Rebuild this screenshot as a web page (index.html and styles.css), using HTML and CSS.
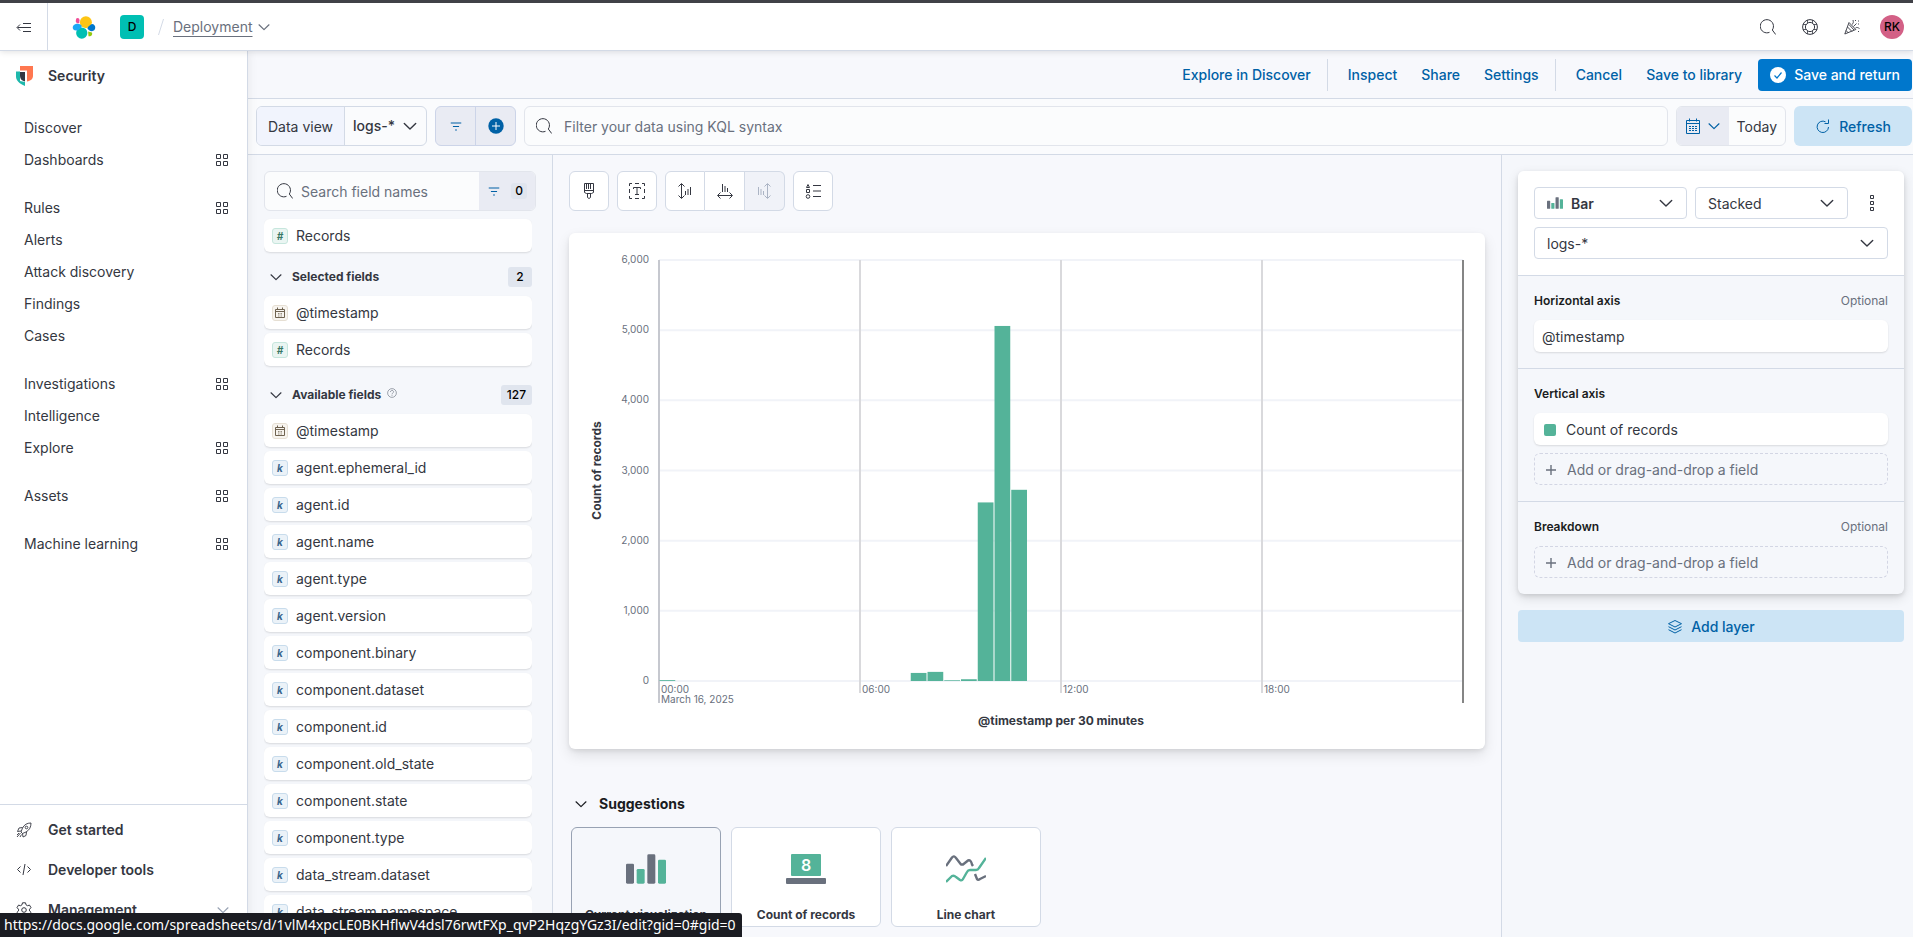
FILE: index.html
```html
<!DOCTYPE html>
<html lang="en">
<head>
  <meta charset="UTF-8">
  <title>Lens - Elastic</title>
  <meta name="viewport" content="width=device-width, initial-scale=1.0">
  <link rel="stylesheet" href="styles.css">
</head>
<body>

<!-- Shared icons -->
<svg class="sprite" aria-hidden="true">
  <symbol id="i-down" viewBox="0 0 16 16"><path d="M2.3 5.5 8 11l5.700-5.500" fill="none" stroke="currentColor" stroke-width="1.400" stroke-linecap="round" stroke-linejoin="round"/></symbol>
  <symbol id="i-search" viewBox="0 0 16 16"><path d="M9.500 13.300A6.600 6.600 0 1 1 12.300 11M12.300 11l3.400 4.500" fill="none" stroke="currentColor"/></symbol>
  <symbol id="i-filter" viewBox="0 0 16 16"><path d="M2 4.500h12M4.500 8.500h7M7 12.500h2" fill="none" stroke="currentColor" stroke-width="1.200"/></symbol>
  <symbol id="i-apps" viewBox="0 0 16 16"><path d="M2.500 2.500h4v4h-4zM9.500 2.500h4v4h-4zM2.500 9.500h4v4h-4zM9.500 9.500h4v4h-4z" fill="none" stroke="currentColor"/></symbol>
  <symbol id="i-plus" viewBox="0 0 16 16"><path d="M8 3v10M3 8h10" fill="none" stroke="currentColor" stroke-width="1.400"/></symbol>
  <symbol id="i-bars" viewBox="0 0 30 22">
    <rect x="0" y="7" width="6" height="15" rx="1" fill="#69707d"/>
    <rect x="8" y="11" width="6" height="11" rx="1" fill="#54b399"/>
    <rect x="16" y="0" width="6" height="22" rx="1" fill="#69707d"/>
    <rect x="24" y="4" width="6" height="18" rx="1" fill="#54b399"/>
  </symbol>
  <symbol id="i-date" viewBox="0 0 14 14"><path d="M2.500 3.500h9v8h-9zM2.500 5.500h9M4.500 1.500v2M9.500 1.500v2" fill="none" stroke="currentColor"/><path d="M5.500 7v3.500M7 7v3.500M8.500 7v3.500" fill="none" stroke="currentColor" stroke-width=".7" stroke-dasharray="1 .5"/></symbol>
</svg>

<div class="app">
  <header class="header">
    <button class="header-menu" aria-label="Collapse navigation">
      <svg width="16" height="16" viewBox="0 0 16 16" fill="none" stroke="currentColor"><path d="M7 3.500h8M1.500 7.500H15M7 11.500h8M4 4.500l-3 3 3 3"/></svg>
    </button>
    <a href="#" class="logo" aria-label="Elastic home">
      <svg width="24" height="24" viewBox="0 0 32 32">
        <circle cx="18.500" cy="9.500" r="8" fill="#fec514"/>
        <circle cx="13" cy="24" r="7.500" fill="#00bfb3"/>
        <path d="M5 12c3-1 7 .5 8 2.500.500 2.500-3 4.500-5.500 6C3 21.500.500 19 1 16c.500-2 2-3.500 4-4z" fill="#1ba9f5"/>
        <path d="M26.500 12c3 0 4.500 2.500 4.500 5s-2 4.500-4.500 4.500-5.500-2-6-4c1-2.500 4-4.500 6-5.500z" fill="#0077cc"/>
        <path d="M5.500 5C7 3 10 4 10 7l-.5 4C7 11.500 5 10 5 8z" fill="#f04e98"/>
        <path d="m21.500 22 5 1.200c1.500 3-1.500 6-4.500 5z" fill="#93c90e"/>
      </svg>
    </a>
    <button class="space" aria-label="Default space">D</button>
    <nav class="crumbs" aria-label="Breadcrumbs">
      <svg width="6" height="18" viewBox="0 0 6 18"><path d="M5.500 1 .5 17" stroke="#d3dae6"/></svg>
      <a href="#">Deployment</a>
      <svg class="icon-sm"><use href="#i-down"/></svg>
    </nav>
    <div class="header-right">
      <button aria-label="Search"><svg class="icon"><use href="#i-search"/></svg></button>
      <button aria-label="Help">
        <svg class="icon" viewBox="0 0 16 16" fill="none" stroke="currentColor"><circle cx="8" cy="8" r="7.400"/><circle cx="8" cy="8" r="4.600"/><path d="M5.500 1v3.500M10.500 1v3.500M5.500 11.500V15M10.500 11.500V15M1 5.500h3.500M11.500 5.500H15M1 10.500h3.500M11.500 10.500H15" stroke-width=".8"/></svg>
      </button>
      <button aria-label="What's new">
        <svg class="icon" viewBox="0 0 16 16" fill="none" stroke="currentColor" stroke-width=".9"><path d="M5 3.500.800 15l11-4.500zM3.500 8l4.500 4.500M2 11.500l2.500 2.500M5 5.500l5 5.500M8 5.500c1.500-1 1.500-2.500 1-4.500M9.500 7.500l3-3M11.500 9c1-1 2.500-.5 4 .5M11.500 1v1M14.500 1.500v1M14 5h1M14.500 12v1"/></svg>
      </button>
      <button class="user" aria-label="User menu">RK</button>
    </div>
  </header>

  <aside class="sidebar">
    <a href="#" class="solution">
      <svg width="17" height="20" viewBox="0 0 17 20">
        <path d="M4 0h13v10c0 3-2.500 5-6 5.500V4.500H4z" fill="#ff7750"/>
        <path d="M0 5.500h4V15l5 1v4C3 17.500 0 14.500 0 10.500z" fill="#1eb8ac"/>
        <path d="M4 6h5v9.500C6 15 4 13 4 10z" fill="#343741"/>
      </svg>
      <span>Security</span>
    </a>
    <nav class="side-nav" aria-label="Security">
      <ul>
        <li><a href="#">Discover</a></li>
        <li><a href="#">Dashboards</a><svg class="icon"><use href="#i-apps"/></svg></li>
      </ul>
      <ul>
        <li><a href="#">Rules</a><svg class="icon"><use href="#i-apps"/></svg></li>
        <li><a href="#">Alerts</a></li>
        <li><a href="#">Attack discovery</a></li>
        <li><a href="#">Findings</a></li>
        <li><a href="#">Cases</a></li>
      </ul>
      <ul>
        <li><a href="#">Investigations</a><svg class="icon"><use href="#i-apps"/></svg></li>
        <li><a href="#">Intelligence</a></li>
        <li><a href="#">Explore</a><svg class="icon"><use href="#i-apps"/></svg></li>
      </ul>
      <ul>
        <li><a href="#">Assets</a><svg class="icon"><use href="#i-apps"/></svg></li>
      </ul>
      <ul>
        <li><a href="#">Machine learning</a><svg class="icon"><use href="#i-apps"/></svg></li>
      </ul>
    </nav>
    <div class="side-footer">
      <a href="#">
        <svg class="icon" viewBox="0 0 16 16" fill="none" stroke="currentColor" stroke-width=".9"><path d="M15 1c-4 0-6.500 1.500-8.500 5L5 10l1.500 1.500L10 10c3.500-2 5-5 5-9zM6.500 5.500 3 6 1.500 9.500l3.500-.5M10.500 10 10 13.500 7 15l-.5-3.500M4.500 11l-3.500 4M3 11l-2 2M5.500 12.500 4 15"/><circle cx="10.500" cy="5.500" r="1.300"/></svg>
        <span>Get started</span>
      </a>
      <a href="#">
        <svg class="icon" viewBox="0 0 16 16" fill="none" stroke="currentColor"><path d="M4.500 4.500 1.500 7.500l3 3M11.500 4.500l3 3-3 3M9 2 7 13"/></svg>
        <span>Developer tools</span>
      </a>
      <a href="#">
        <svg class="icon" viewBox="0 0 16 16" fill="none" stroke="currentColor"><path d="M6.500.800h3l.5 2 1.500.900 2-.6 1.500 2.600-1.500 1.500v1.700l1.500 1.400-1.500 2.600-2-.5-1.500.8-.5 2h-3l-.5-2-1.500-.8-2 .5L1 10.300l1.500-1.400V7.200L1 5.700l1.500-2.600 2 .6L6 2.800z"/><circle cx="8" cy="8" r="2.300"/></svg>
        <span>Management</span>
        <svg class="icon-sm muted"><use href="#i-down"/></svg>
      </a>
    </div>
  </aside>

  <main class="main">
    <div class="actions">
      <div class="action-group"><a href="#">Explore in Discover</a></div>
      <div class="action-group"><a href="#">Inspect</a><a href="#">Share</a><a href="#">Settings</a></div>
      <div class="action-group"><a href="#">Cancel</a><a href="#">Save to library</a></div>
      <button class="save">
        <svg class="icon" viewBox="0 0 16 16"><circle cx="8" cy="8" r="8" fill="#fff"/><path d="m4.500 8.500 2.500 2.500 4.500-5.500" fill="none" stroke="#07c" stroke-width="1.200"/></svg>
        Save and return
      </button>
    </div>

    <div class="query">
      <div class="data-view">
        <label for="dataView">Data view</label>
        <div class="select">
          <select id="dataView"><option>logs-*</option></select>
          <svg class="icon"><use href="#i-down"/></svg>
        </div>
      </div>
      <div class="filter-group">
        <button aria-label="Saved query menu"><svg class="icon-sm"><use href="#i-filter"/></svg></button>
        <button aria-label="Add filter"><svg class="icon" viewBox="0 0 16 16"><circle cx="8" cy="8" r="7.700" fill="#0061a6"/><path d="M8 4v8M4 8h8" stroke="#fff"/></svg></button>
      </div>
      <div class="kql">
        <svg class="icon"><use href="#i-search"/></svg>
        <input type="text" aria-label="Query" placeholder="Filter your data using KQL syntax">
      </div>
      <div class="date">
        <button class="date-quick" aria-label="Date quick select">
          <svg class="icon" viewBox="0 0 16 16" fill="none" stroke="currentColor"><path d="M1.500 2.500h13v13h-13zM1.500 5.500h13M4.500.5v3M11.500.5v3"/><path d="M4 8.500h8M4 10.500h8M4 12.500h8" stroke-dasharray="2 1"/></svg>
          <svg class="icon-sm"><use href="#i-down"/></svg>
        </button>
        <button class="date-value">Today</button>
      </div>
      <button class="refresh">
        <svg class="icon" viewBox="0 0 16 16" fill="none" stroke="currentColor"><path d="M10.500 2.800A5.700 5.700 0 1 0 13.500 8M9.500 4.500h4V.5"/></svg>
        Refresh
      </button>
    </div>

    <div class="workspace">
      <section class="fields" aria-label="Fields">
        <div class="field-search">
          <svg class="icon"><use href="#i-search"/></svg>
          <input type="text" aria-label="Search field names" placeholder="Search field names">
          <button aria-label="Filter by type"><svg class="icon-sm"><use href="#i-filter"/></svg><span>0</span></button>
        </div>
        <div class="field-scroll">
          <ul class="field-list">
            <li><i class="tok num">#</i>Records</li>
          </ul>
          <h2 class="field-head"><svg class="icon-sm"><use href="#i-down"/></svg>Selected fields<span>2</span></h2>
          <ul class="field-list">
            <li><i class="tok date-tok"><svg><use href="#i-date"/></svg></i>@timestamp</li>
            <li><i class="tok num">#</i>Records</li>
          </ul>
          <h2 class="field-head second"><svg class="icon-sm"><use href="#i-down"/></svg>Available fields
            <svg class="help" viewBox="0 0 16 16" fill="none" stroke="currentColor"><circle cx="8" cy="8" r="7"/><path d="M5.500 6.500C5.500 3 10.500 3 10.500 6.200 10.500 8 8 8 8 10M8 11v1.500"/></svg>
            <span>127</span></h2>
          <ul class="field-list">
            <li><i class="tok date-tok"><svg><use href="#i-date"/></svg></i>@timestamp</li>
            <li><i class="tok">k</i>agent.ephemeral_id</li>
            <li><i class="tok">k</i>agent.id</li>
            <li><i class="tok">k</i>agent.name</li>
            <li><i class="tok">k</i>agent.type</li>
            <li><i class="tok">k</i>agent.version</li>
            <li><i class="tok">k</i>component.binary</li>
            <li><i class="tok">k</i>component.dataset</li>
            <li><i class="tok">k</i>component.id</li>
            <li><i class="tok">k</i>component.old_state</li>
            <li><i class="tok">k</i>component.state</li>
            <li><i class="tok">k</i>component.type</li>
            <li><i class="tok">k</i>data_stream.dataset</li>
            <li><i class="tok">k</i>data_stream.namespace</li>
          </ul>
        </div>
      </section>

      <section class="canvas" aria-label="Visualization">
        <div class="toolbar">
          <button aria-label="Style"><svg class="icon" viewBox="0 0 16 16" fill="none" stroke="currentColor"><path d="M3.500.5h9v9l-2 1h-5l-2-1zM3.500 7.500h9M6.500 10.500v4l1.500 1 1.500-1v-4M5.500 1v5M7.500 1v5M9.500 1v5"/></svg></button>
          <button aria-label="Titles and text"><svg class="icon" viewBox="0 0 16 16" fill="none" stroke="currentColor"><path d="M.5 3V.5H3M13 .5h2.500V3M15.500 13v2.500H13M3 15.500H.5V13M6 .5h4M6 15.500h4M.5 6v4M15.500 6v4M4.500 6V4.500h7V6M8 4.500v7M6 11.500h4"/></svg></button>
          <div class="button-group">
            <button aria-label="Left axis"><svg class="icon" viewBox="0 0 16 16" fill="none" stroke="currentColor"><path d="M4.500 1v14M1.500 3.500l3-3 3 3M1.500 12.500l3 3 3-3M8.500 8v4M11 6v6M13.500 4v8"/></svg></button>
            <button aria-label="Bottom axis"><svg class="icon" viewBox="0 0 16 16" fill="none" stroke="currentColor"><path d="M1 12.500h14M3.500 9.500l-3 3 3 3M12.500 9.500l3 3-3 3M5.500 1v8M8 3v6M10.500 5v4"/></svg></button>
            <button aria-label="Right axis" disabled><svg class="icon" viewBox="0 0 16 16" fill="none" stroke="currentColor"><path d="M10.500 1v14M7.500 3.500l3-3 3 3M7.500 12.500l3 3 3-3M6.500 8v4M4 6v6M1.500 4v8"/></svg></button>
          </div>
          <button aria-label="Legend"><svg class="icon" viewBox="0 0 16 16" fill="none" stroke="currentColor"><path d="M1.500 4.500 3 1.500l1.500 3zM1.500 6.500h3v3h-3zM8 2.500h8M8 8h8M8 13.500h8"/><circle cx="3" cy="13.500" r="1.800"/></svg></button>
        </div>

        <div class="chart-panel">
          <svg class="chart" id="chart" viewBox="0 0 884 484" role="img" aria-label="Count of records by @timestamp per 30 minutes"></svg>
        </div>

        <h2 class="suggest-head"><svg class="icon-sm"><use href="#i-down"/></svg>Suggestions</h2>
        <div class="suggestions">
          <button class="suggestion current">
            <svg width="40" height="30"><use href="#i-bars"/></svg>
            <span>Current visualization</span>
          </button>
          <button class="suggestion">
            <svg width="40" height="30" viewBox="0 0 40 30"><rect x="5" width="30" height="22" rx="1" fill="#54b399"/><rect y="24" width="40" height="6" rx="1" fill="#69707d"/><text x="20" y="17" text-anchor="middle" fill="#fff" font-size="16" font-weight="600">8</text></svg>
            <span>Count of records</span>
          </button>
          <button class="suggestion">
            <svg width="40" height="30" viewBox="0 0 40 30" fill="none" stroke-width="2.400" stroke-linejoin="round"><path d="M0 12 6 3.500Q8 1 10 4l5 6.500h2l5-4q3-1 4 4l1 1.500M29 20l2 5q1 1.500 3 0l6-3" stroke="#69707d"/><path d="M0 28l6-6q2-1 4 1l4 3q2 1 3-1l4-7q1-2 3-2h6q2 0 3-2l7-10" stroke="#54b399"/></svg>
            <span>Line chart</span>
          </button>
        </div>
      </section>

      <section class="config" aria-label="Layer settings">
        <div class="layer">
          <div class="layer-head">
            <div class="layer-row">
              <div class="select boxed">
                <svg class="bars-icon"><use href="#i-bars"/></svg>
                <select class="strong" aria-label="Visualization type"><option>Bar</option></select>
                <svg class="icon"><use href="#i-down"/></svg>
              </div>
              <div class="select boxed">
                <select aria-label="Stacking"><option>Stacked</option></select>
                <svg class="icon"><use href="#i-down"/></svg>
              </div>
              <button class="more" aria-label="Layer actions"><svg class="icon" viewBox="0 0 16 16" fill="none" stroke="currentColor"><path d="M6.500.5h3v3h-3zM6.500 6.500h3v3h-3zM6.500 12.500h3v3h-3z"/></svg></button>
            </div>
            <div class="select boxed">
              <select aria-label="Layer data view"><option>logs-*</option></select>
              <svg class="icon"><use href="#i-down"/></svg>
            </div>
          </div>
          <div class="dimension">
            <h3>Horizontal axis <small>Optional</small></h3>
            <button class="field">@timestamp</button>
          </div>
          <div class="dimension">
            <h3>Vertical axis</h3>
            <button class="field"><span class="swatch"></span>Count of records</button>
            <button class="field empty"><svg class="icon"><use href="#i-plus"/></svg>Add or drag-and-drop a field</button>
          </div>
          <div class="dimension">
            <h3>Breakdown <small>Optional</small></h3>
            <button class="field empty"><svg class="icon"><use href="#i-plus"/></svg>Add or drag-and-drop a field</button>
          </div>
        </div>
        <button class="add-layer">
          <svg class="icon" viewBox="0 0 16 16" fill="none" stroke="currentColor" stroke-linejoin="round"><path d="M8 1.500 14.500 4.700 8 8 1.500 4.700zM1.500 7.700 8 11l6.500-3.300M1.500 10.700 8 14l6.500-3.300"/></svg>
          Add layer
        </button>
      </section>
    </div>
  </main>
</div>

<div class="link-status">https://docs.google.com/spreadsheets/d/1vlM4xpcLE0BKHflwV4dsl76rwtFXp_qvP2HqzgYGz3I/edit?gid=0#gid=0</div>

<script src="chart.js"></script>
</body>
</html>
```

FILE: styles.css
```css
* { box-sizing: border-box; margin: 0; padding: 0; }

body {
  font-family: Inter, "Liberation Sans", sans-serif;
  font-size: 14px;
  line-height: 20px;
  color: #343741;
  background: #f7f8fc;
}

a { color: inherit; text-decoration: none; }
ul { list-style: none; }

button, input, select {
  font: inherit;
  color: inherit;
  background: none;
  border: none;
  outline: none;
}

button { cursor: pointer; }
select { appearance: none; }
svg { flex: none; }

.sprite { position: absolute; width: 0; height: 0; }
.icon { width: 16px; height: 16px; }
.icon-sm { width: 14px; height: 14px; }
.muted { color: #98a2b3; }

.app {
  display: grid;
  grid-template: auto minmax(0, 1fr) / 248px minmax(0, 1fr);
  height: 100vh;
  border-top: 3px solid #404147;
  overflow: hidden;
}

/* Header */
.header {
  grid-column: 1 / -1;
  display: flex;
  align-items: center;
  height: 48px;
  background: #fff;
  border-bottom: 1px solid #d3dae6;
  box-shadow: 0 1px 6px rgba(0, 0, 0, .12);
  z-index: 2;
}

.header-menu {
  width: 48px;
  height: 47px;
  border-right: 1px solid #d3dae6;
}

.header-menu svg { vertical-align: middle; }
.logo { display: flex; margin-left: 24px; }

.space {
  width: 24px;
  height: 24px;
  margin-left: 24px;
  border-radius: 4px;
  background: #00bfb3;
  color: #000;
  font-size: 12px;
  font-weight: 500;
}

.crumbs {
  display: flex;
  align-items: center;
  gap: 8px;
  margin-left: 14px;
  color: #69707d;
}

.crumbs a {
  margin-left: 1px;
  text-decoration: underline;
  text-underline-offset: 4px;
}

.crumbs .icon-sm { margin-left: -4px; }

.header-right {
  display: flex;
  align-items: center;
  gap: 26px;
  margin-left: auto;
  padding-right: 9px;
}

.header-right button { display: flex; }

.header-right .user {
  width: 24px;
  height: 24px;
  margin-left: -6px;
  align-items: center;
  justify-content: center;
  border-radius: 50%;
  background: #d36086;
  color: #000;
  font-size: 12px;
  font-weight: 500;
}

/* Sidebar */
.sidebar {
  display: flex;
  flex-direction: column;
  min-height: 0;
  background: #fff;
  border-right: 1px solid #d3dae6;
  box-shadow: 0 0 10px rgba(0, 0, 0, .08);
  z-index: 1;
}

.solution {
  display: flex;
  align-items: center;
  gap: 15px;
  height: 49px;
  padding-left: 16px;
  font-weight: 600;
}

.side-nav {
  flex: 1;
  display: flex;
  flex-direction: column;
  gap: 16px;
  padding: 12px 17px 0 24px;
}

.side-nav li {
  display: flex;
  align-items: center;
  justify-content: space-between;
  height: 32px;
}

.side-footer {
  padding: 5px 0 7px;
  border-top: 1px solid #d3dae6;
}

.side-footer a {
  display: flex;
  align-items: center;
  gap: 16px;
  height: 40px;
  padding: 0 17px 0 16px;
  font-weight: 600;
}

.side-footer .muted { margin-left: auto; }

/* Top actions */
.main {
  display: flex;
  flex-direction: column;
  min-width: 0;
  min-height: 0;
}

.actions {
  display: flex;
  align-items: center;
  justify-content: flex-end;
  height: 48px;
  padding-right: 1px;
  border-bottom: 1px solid #d3dae6;
  color: #0061a6;
  font-weight: 500;
}

.action-group {
  display: flex;
  gap: 24px;
  padding: 6px 16px 6px 20px;
}

.action-group + .action-group { border-left: 1px solid #d3dae6; }

.save {
  display: flex;
  align-items: center;
  gap: 8px;
  height: 32px;
  padding: 0 12px;
  border-radius: 4px;
  background: #07c;
  color: #fff;
}

/* Query bar */
.query {
  display: flex;
  gap: 8px;
  padding: 7px 1px 8px 8px;
  border-bottom: 1px solid #d3dae6;
  background: #fafbfd;
}

.select { display: flex; align-items: center; }
.select select { flex: 1; min-width: 0; }
.select select + .icon { pointer-events: none; }

.data-view, .filter-group, .kql, .date {
  display: flex;
  align-items: stretch;
  height: 40px;
  border: 1px solid #d3dae6;
  border-radius: 6px;
  overflow: hidden;
}

.data-view label {
  padding: 10px 11px 8px;
  border-right: 1px solid #d3dae6;
  background: #f1f4fd;
}

.data-view .select {
  width: 81px;
  padding: 0 8px;
  font-weight: 500;
}

.filter-group { background: #e9ebf3; border-color: #ccd4e8; }

.filter-group button {
  display: flex;
  align-items: center;
  justify-content: center;
  width: 39px;
  color: #0061a6;
}

.filter-group button + button { width: 40px; border-left: 1px solid #ccd4e8; }

.kql {
  flex: 1;
  align-items: center;
  gap: 12px;
  padding-left: 11px;
  border-color: #e2e5ec;
  background: #fbfcfd;
}

.kql input { flex: 1; height: 38px; padding-top: 1px; }
input::placeholder { color: #69707d; opacity: 1; }

.date { border-color: #e2e5ec; background: #fbfcfd; }

.date-quick {
  display: flex;
  align-items: center;
  gap: 6px;
  padding: 0 8px;
  background: #e9ebf3;
  color: #0061a6;
}

.date-value { padding: 1px 8px 0; }

.refresh, .add-layer {
  display: flex;
  align-items: center;
  justify-content: center;
  gap: 8px;
  padding-top: 1px;
  border-radius: 6px;
  background: #cce4f5;
  color: #0061a6;
  font-weight: 500;
}

.refresh { width: 118px; }

.workspace {
  flex: 1;
  display: grid;
  grid-template-columns: 305px minmax(0, 1fr) 412px;
  min-height: 0;
}

/* Fields panel */
.fields {
  display: flex;
  flex-direction: column;
  min-height: 0;
  padding: 16px 16px 0;
  border-right: 1px solid #d3dae6;
  background: #f5f7fb;
}

.field-search {
  display: flex;
  align-items: center;
  height: 40px;
  padding-left: 12px;
  border: 1px solid #e2e5ec;
  border-radius: 6px;
  background: #fbfcfd;
  overflow: hidden;
}

.field-search input { flex: 1; min-width: 0; padding: 1px 0 0 8px; }

.field-search button {
  display: flex;
  align-items: center;
  gap: 10px;
  height: 38px;
  padding: 0 8px;
  background: #e9ebf3;
  color: #0061a6;
}

.field-search button span {
  min-width: 16px;
  border-radius: 3px;
  background: #e0e5ee;
  color: #000;
  font-size: 12px;
  font-weight: 500;
  line-height: 16px;
}

.field-scroll {
  flex: 1;
  min-height: 0;
  margin-right: 4px;
  padding-top: 8px;
  overflow: hidden;
}

.field-list {
  display: flex;
  flex-direction: column;
  gap: 4px;
}

.field-list li {
  display: flex;
  align-items: center;
  gap: 8px;
  height: 33px;
  padding-left: 8px;
  border-radius: 6px;
  background: #fff;
  box-shadow: 0 1px 2px rgba(0, 0, 0, .12);
}

.tok {
  display: flex;
  align-items: center;
  justify-content: center;
  width: 16px;
  height: 16px;
  border: 1px solid #c8dcec;
  border-radius: 3px;
  background: #ebf2f8;
  color: #39658c;
  font-size: 10px;
  font-weight: 700;
  line-height: 14px;
}

.tok svg { width: 14px; height: 14px; }
.tok.num { border-color: #c6e6dd; background: #eaf5f2; color: #387765; }
.tok.date-tok { border-color: #e6dfd3; background: #f7f4ef; color: #6f6350; }

.field-head {
  display: flex;
  align-items: center;
  gap: 9px;
  padding: 15px 0 9px 5px;
  font-size: 12px;
  font-weight: 700;
}

.field-head.second { padding-top: 19px; }

.field-head span {
  margin-left: auto;
  min-width: 24px;
  padding: 0 6px;
  border-radius: 3px;
  background: #e0e5ee;
  color: #000;
  font-weight: 500;
  text-align: center;
}

.help { width: 10px; height: 10px; margin: -5px 0 0 -3px; color: #69707d; }

/* Canvas */
.canvas { padding: 16px 16px 0; overflow: hidden; }
.toolbar { display: flex; gap: 8px; }

.toolbar button {
  display: flex;
  align-items: center;
  justify-content: center;
  width: 40px;
  height: 40px;
  border: 1px solid #d3dae6;
  border-radius: 6px;
  background: #fff;
}

.button-group { display: flex; }
.toolbar .button-group button { border-radius: 0; }
.toolbar .button-group button + button { border-left: none; }
.toolbar .button-group button:first-child { border-radius: 6px 0 0 6px; }
.toolbar .button-group button:last-child { border-radius: 0 6px 6px 0; }
.toolbar button:disabled { background: #f0f2f8; color: #abb4c4; }

.chart-panel {
  margin-top: 22px;
  padding: 16px;
  border-radius: 6px;
  background: #fff;
  box-shadow: 0 2px 4px rgba(0, 0, 0, .08), 0 6px 14px rgba(0, 0, 0, .1);
}

.chart { display: block; width: 100%; }
.chart text { font-size: 10px; fill: #69707d; }
.chart .axis-title { font-size: 12px; font-weight: 700; fill: #343741; }

.suggest-head {
  display: flex;
  align-items: center;
  gap: 11px;
  margin-top: 45px;
  padding-left: 5px;
  color: #1a1c21;
  font-size: 14px;
  font-weight: 700;
}

.suggestions {
  display: flex;
  gap: 10px;
  margin-top: 13px;
  padding-left: 2px;
}

.suggestion {
  display: flex;
  flex-direction: column;
  align-items: center;
  justify-content: space-between;
  width: 150px;
  height: 100px;
  padding: 26px 4px 1px;
  border: 1px solid #d3dae6;
  border-radius: 6px;
  background: #fff;
  font-size: 12px;
  font-weight: 700;
}

.suggestion.current { border-color: #98a2b3; background: #f5f7fb; }

/* Config panel */
.config {
  padding: 16px 9px 0 16px;
  border-left: 1px solid #d3dae6;
  background: #f5f7fb;
}

.layer {
  border-radius: 6px;
  background: #f5f7fb;
  box-shadow: 0 2px 4px rgba(0, 0, 0, .1), 0 4px 12px rgba(0, 0, 0, .12);
}

.layer-head {
  display: flex;
  flex-direction: column;
  gap: 8px;
  padding: 16px;
  border-radius: 6px 6px 0 0;
  background: #fff;
}

.layer-row { display: flex; gap: 8px; }
.layer-row .select { flex: 1; min-width: 0; }

.boxed {
  height: 32px;
  padding: 0 12px;
  border: 1px solid #d3dae6;
  border-radius: 4px;
}

.boxed select { padding-top: 1px; }
.bars-icon { width: 16px; height: 12px; margin-right: 8px; }
.strong { font-weight: 600; }
.more { display: flex; align-items: center; justify-content: center; width: 32px; }

.dimension {
  display: flex;
  flex-direction: column;
  gap: 8px;
  padding: 15px 16px 16px;
  border-top: 1px solid #d3dae6;
}

.dimension h3 {
  display: flex;
  justify-content: space-between;
  margin-bottom: 1px;
  color: #1a1c21;
  font-size: 12px;
  font-weight: 600;
}

.dimension small { color: #69707d; font-size: 12px; font-weight: 400; }

.field {
  display: flex;
  align-items: center;
  gap: 10px;
  height: 32px;
  padding: 1px 8px 0;
  border-radius: 6px;
  background: #fff;
  box-shadow: 0 1px 2px rgba(0, 0, 0, .12);
}

.swatch {
  width: 12px;
  height: 12px;
  margin-left: 2px;
  border-radius: 2px;
  background: #54b399;
}

.field.empty {
  gap: 8px;
  border: 1px dashed #d3d6e4;
  background: none;
  box-shadow: none;
  color: #69707d;
}

.add-layer {
  width: 100%;
  height: 32px;
  margin-top: 16px;
  border-radius: 4px;
}

/* Link preview over the bottom left corner */
.link-status {
  position: fixed;
  left: 0;
  bottom: 0;
  height: 24px;
  padding: 0 6px 0 4px;
  border-radius: 0 3px 0 0;
  background: #1b1c22;
  color: #fff;
  font-family: "Noto Sans", sans-serif;
  font-size: 14px;
  line-height: 24px;
  z-index: 3;
}
```

FILE: chart.js
```javascript
const chart = document.getElementById("chart");

// plot area inside the 884x484 viewBox
const left = 74, right = 878, top_ = 11, bottom = 432;
const maxY = 6000;
const slots = 48;

// count of records per 30 minutes, key is the slot of the day
const counts = { 0: 12, 15: 115, 16: 130, 17: 10, 18: 25, 19: 2545, 20: 5060, 21: 2725 };

function y(value) {
  return bottom - (value / maxY) * (bottom - top_);
}

function add(tag, attrs, text) {
  const el = document.createElementNS("http://www.w3.org/2000/svg", tag);
  for (const key in attrs) el.setAttribute(key, attrs[key]);
  if (text) el.textContent = text;
  chart.appendChild(el);
}

for (let v = 0; v <= maxY; v += 1000) {
  add("line", { x1: left, x2: right, y1: y(v), y2: y(v), stroke: "#f1f3f8", "stroke-width": 2 });
  add("text", { x: left - 10, y: y(v) + 3, "text-anchor": "end" }, v.toLocaleString("en-US"));
}

["00:00", "06:00", "12:00", "18:00"].forEach((label, i) => {
  const x = left + i * (right - left) / 4;
  add("line", { x1: x, x2: x, y1: top_, y2: i ? bottom + 12 : bottom + 22, stroke: i ? "#d9d9dc" : "#c6c8cf", "stroke-width": 2 });
  add("text", { x: x + 2, y: bottom + 12 }, label);
});
add("text", { x: left + 2, y: bottom + 22 }, "March 16, 2025");
add("line", { x1: right, x2: right, y1: top_, y2: bottom + 22, stroke: "#858585", "stroke-width": 2 });

const step = (right - left) / slots;
for (const slot in counts) {
  const h = bottom - y(counts[slot]);
  add("rect", { x: left + slot * step + 0.5, y: bottom - h, width: step - 1, height: h, fill: "#54b399" });
}

const midY = (top_ + bottom) / 2;
add("text", { class: "axis-title", x: (left + right) / 2, y: bottom + 44, "text-anchor": "middle" }, "@timestamp per 30 minutes");
add("text", { class: "axis-title", x: 16, y: midY, "text-anchor": "middle", transform: `rotate(-90 16 ${midY})` }, "Count of records");
```
